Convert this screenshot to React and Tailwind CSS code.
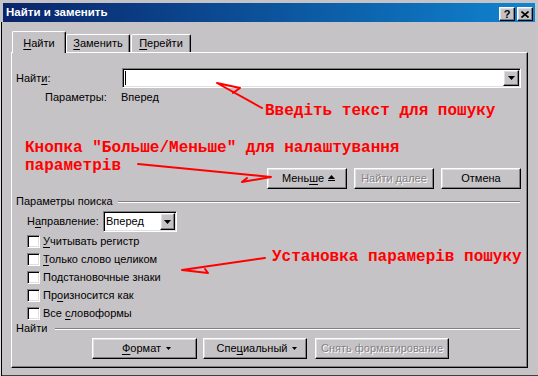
import React from "react";

// classic win2000 bevels
const raised =
  "border border-t-white border-l-white border-r-black border-b-black shadow-[inset_-1px_-1px_0_#808080,inset_1px_1px_0_#dfdfdf]";
const sunken =
  "border border-t-[#808080] border-l-[#808080] border-r-white border-b-white shadow-[inset_1px_1px_0_#000,inset_-1px_-1px_0_#dfdfdf]";
const disabledText = "text-[#848284] [text-shadow:1px_1px_0_#fff]";
const red =
  "absolute font-['Liberation_Mono','Courier_New',monospace] font-bold text-[16px] leading-[18px] text-[#ff0000] whitespace-pre";

const U = ({ children }) => (
  <span className="underline decoration-1 underline-offset-[2px]">{children}</span>
);

const DownTri = ({ w = 7, h = 4 }) => (
  <svg width={w} height={h} viewBox={`0 0 ${w} ${h}`}>
    <polygon points={`0,0 ${w},0 ${w / 2},${h}`} fill="#000" />
  </svg>
);

const Separator = ({ label, gap }) => (
  <div className="flex items-center h-[13px]">
    <span>{label}</span>
    <div className={`flex-1 h-[2px] border-t border-b border-t-[#808080] border-b-white mr-[1px] ${gap}`} />
  </div>
);

const Check = ({ children }) => (
  <div className="flex items-center h-[18px] ml-[11px]">
    <div className={`${sunken} w-[13px] h-[13px] bg-white`} />
    <span className="ml-[3px]">{children}</span>
  </div>
);

export default function App() {
  return (
    <div className="relative w-[538px] h-[376px] flex flex-col bg-[#c6c3c6] overflow-hidden text-[11px] leading-[13px] text-black font-['Liberation_Sans',Arial,sans-serif]">
      {/* заголовок окна */}
      <div className="mx-[3px] mt-[3px] h-[19px] flex bg-linear-to-r from-[#0a246a] to-[#1084d0] pl-[3px] pr-[2px]">
        <span className="self-center text-white font-bold text-[11.5px]">Найти и заменить</span>
        <div className="ml-auto self-end mb-[1px] flex gap-[2px]">
          <div className={`${raised} w-[16px] h-[14px] bg-[#c6c3c6] flex items-center justify-center font-bold text-[11px] leading-none`}>
            ?
          </div>
          <div className={`${raised} w-[16px] h-[14px] bg-[#c6c3c6] flex items-center justify-center`}>
            <svg width="8" height="7" viewBox="0 0 8 7">
              <path d="M0.5 0.5 L7.5 6.5 M7.5 0.5 L0.5 6.5" stroke="#000" strokeWidth="1.6" />
            </svg>
          </div>
        </div>
      </div>

      <div className="flex-1 pt-[9px] pl-[11px] pr-[10px] shadow-[inset_1px_0_0_#dfdfdf,inset_2px_0_0_#000,inset_0_-1px_0_#404040]">
        {/* вкладки */}
        <div className="flex items-end h-[21px] pl-[1px]">
          <div className="relative z-10 w-[54px] h-[22px] -mb-[1px] bg-[#c6c3c6] border-t border-l border-r border-t-white border-l-white border-r-black shadow-[inset_-1px_0_0_#808080] rounded-t-[2px] text-center pt-[5px]">
            <U>Н</U>айти
          </div>
          <div className="w-[64px] h-[18px] border-t border-l border-r border-t-white border-l-white border-r-black shadow-[inset_-1px_0_0_#808080] rounded-t-[2px] text-center pt-[2px]">
            <U>З</U>аменить
          </div>
          <div className="ml-[1px] w-[60px] h-[18px] border-t border-l border-r border-t-white border-l-white border-r-black shadow-[inset_-1px_0_0_#808080] rounded-t-[2px] text-center pt-[2px]">
            <U>П</U>ерейти
          </div>
        </div>

        {/* панель */}
        <div className="h-[316px] border border-t-white border-l-white border-r-black border-b-black shadow-[inset_-1px_-1px_0_#808080] pt-[15px] pl-[4px] pr-[6px]">
          <div className="flex items-center h-[20px]">
            <span className="w-[106px]">
              Найт<U>и</U>:
            </span>
            <div className={`${sunken} flex-1 h-[20px] bg-white flex items-center`}>
              <div className="ml-[2px] w-px h-[14px] bg-black" />
              <div className={`${raised} ml-auto mr-[1px] w-[16px] h-[16px] bg-[#c6c3c6] flex items-center justify-center`}>
                <DownTri />
              </div>
            </div>
          </div>

          <div className="mt-[3px] flex h-[13px] ml-[29px]">
            <span className="w-[76px]">Параметры:</span>
            <span>Вперед</span>
          </div>

          <div className="mt-[64px] flex justify-end gap-[7px] h-[21px]">
            <div className={`${raised} w-[80px] h-[21px] flex items-center justify-center gap-[4px] pl-[3px]`}>
              <span>
                Мень<U>ш</U>е
              </span>
              <svg width="7" height="7" viewBox="0 0 7 7">
                <polygon points="3.5,0 7,4 0,4" fill="#000" />
                <rect x="0" y="5" width="7" height="1" fill="#000" />
              </svg>
            </div>
            <div className={`${raised} w-[80px] h-[21px] flex items-center justify-center ${disabledText}`}>
              Найти далее
            </div>
            <div className={`${raised} w-[80px] h-[21px] flex items-center justify-center`}>Отмена</div>
          </div>

          <div className="mt-[6px]">
            <Separator label="Параметры поиска" gap="ml-[5px]" />
          </div>

          <div className="mt-[3px] flex items-center h-[21px] ml-[11px]">
            <span className="w-[76px]">
              Н<U>а</U>правление:
            </span>
            <div className={`${sunken} w-[74px] h-[21px] bg-white flex items-center pl-[2px]`}>
              <span>Вперед</span>
              <div className={`${raised} ml-auto mr-[1px] w-[15px] h-[17px] bg-[#c6c3c6] flex items-center justify-center`}>
                <DownTri />
              </div>
            </div>
          </div>

          <Check>
            <U>У</U>читывать регистр
          </Check>
          <Check>
            <U>Т</U>олько слово целиком
          </Check>
          <Check>Подстановочные знаки</Check>
          <Check>
            Пр<U>о</U>износится как
          </Check>
          <Check>
            Все <U>с</U>ловоформы
          </Check>

          <Separator label="Найти" gap="ml-[8px]" />

          <div className="mt-[3px] flex h-[21px]">
            <div className={`${raised} ml-[76px] w-[105px] h-[21px] flex items-center justify-center gap-[5px] pl-[4px]`}>
              <span>
                <U>Ф</U>ормат
              </span>
              <DownTri w={5} h={3} />
            </div>
            <div className={`${raised} ml-[6px] w-[104px] h-[21px] flex items-center justify-center gap-[5px] pl-[4px]`}>
              <span>
                Спе<U>ц</U>иальный
              </span>
              <DownTri w={5} h={3} />
            </div>
            <div className={`${raised} ml-[8px] w-[134px] h-[21px] flex items-center justify-center ${disabledText}`}>
              Снять форматирование
            </div>
          </div>
        </div>
      </div>

      {/* красные пометки поверх диалога */}
      <div className={`${red} left-[265px] top-[102px]`}>Введіть текст для пошуку</div>
      <div className={`${red} left-[25px] top-[139px]`}>
        {'Кнопка "Больше/Меньше" для налаштування\nпараметрів'}
      </div>
      <div className={`${red} left-[272px] top-[248px]`}>Установка парамерів пошуку</div>

      <svg className="absolute inset-0 pointer-events-none" width="538" height="376" viewBox="0 0 538 376">
        <g fill="none" stroke="#ff0000" strokeWidth="2" strokeLinejoin="round" strokeLinecap="round">
          <polyline points="262,108 217,83 240,88 233,93" />
          <polyline points="138,164 271,177 242,182 247,178" />
          <polyline points="265,258 182,270 208,273 205,269" />
        </g>
      </svg>
    </div>
  );
}
